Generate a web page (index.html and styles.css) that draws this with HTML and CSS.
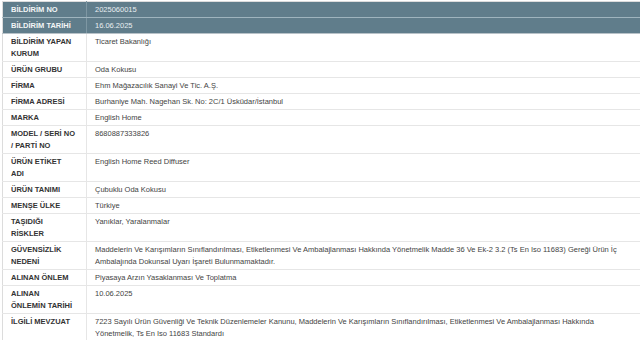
FILE: index.html
```html
<!DOCTYPE html>
<html lang="tr">
<head>
<meta charset="utf-8">
<link rel="stylesheet" href="styles.css">
</head>
<body>
<div class="wrap">
<table class="info">
<colgroup><col class="c-label"><col class="c-value"></colgroup>
<tbody>
<tr class="head"><th>BİLDİRİM NO</th><td>2025060015</td></tr>
<tr class="head"><th>BİLDİRİM TARİHİ</th><td>16.06.2025</td></tr>
<tr><th>BİLDİRİM YAPAN KURUM</th><td>Ticaret Bakanlığı</td></tr>
<tr><th>ÜRÜN GRUBU</th><td>Oda Kokusu</td></tr>
<tr><th>FİRMA</th><td>Ehm Mağazacılık Sanayi Ve Tic. A.Ş.</td></tr>
<tr><th>FİRMA ADRESİ</th><td>Burhaniye Mah. Nagehan Sk. No: 2C/1 Üsküdar/İstanbul</td></tr>
<tr><th>MARKA</th><td>English Home</td></tr>
<tr><th>MODEL / SERİ NO / PARTİ NO</th><td>8680887333826</td></tr>
<tr><th>ÜRÜN ETİKET ADI</th><td>English Home Reed Diffuser</td></tr>
<tr><th>ÜRÜN TANIMI</th><td>Çubuklu Oda Kokusu</td></tr>
<tr><th>MENŞE ÜLKE</th><td>Türkiye</td></tr>
<tr><th>TAŞIDIĞI RİSKLER</th><td>Yanıklar, Yaralanmalar</td></tr>
<tr><th>GÜVENSİZLİK NEDENİ</th><td>Maddelerin Ve Karışımların Sınıflandırılması, Etiketlenmesi Ve Ambalajlanması Hakkında Yönetmelik Madde 36 Ve Ek-2 3.2 (Ts En Iso 11683) Gereği Ürün İç Ambalajında Dokunsal Uyarı İşareti Bulunmamaktadır.</td></tr>
<tr><th>ALINAN ÖNLEM</th><td>Piyasaya Arzın Yasaklanması Ve Toplatma</td></tr>
<tr><th>ALINAN ÖNLEMİN TARİHİ</th><td>10.06.2025</td></tr>
<tr><th>İLGİLİ MEVZUAT</th><td>7223 Sayılı Ürün Güvenliği Ve Teknik Düzenlemeler Kanunu, Maddelerin Ve Karışımların Sınıflandırılması, Etiketlenmesi Ve Ambalajlanması Hakkında Yönetmelik, Ts En Iso 11683 Standardı</td></tr>
</tbody>
</table>
</div>
</body>
</html>
```
FILE: styles.css
```css
html, body {
  margin: 0;
  padding: 0;
  background: #fff;
  overflow: hidden;
}
.wrap {
  padding: 1px 0 0 2px;
}
.info {
  width: 640px;
  table-layout: fixed;
  border-collapse: collapse;
  font-family: "Liberation Sans", Arial, sans-serif;
  font-size: 7.5px;
  line-height: 12px;
  color: #444;
  border-left: 1px solid #dcdcdc;
  border-top: 1px solid #dcdcdc;
}
.c-label {
  width: 84px;
}
.info th, .info td {
  text-align: left;
  vertical-align: top;
  padding: 2px 14px 1px 8px;
  border-bottom: 1px solid #e6e6e6;
}
.info th {
  padding-right: 10.6px;
  font-weight: bold;
  color: #333;
  border-right: 1px solid #e6e6e6;
}
.info tr.head th, .info tr.head td {
  background: #607d8b;
  color: #f2f5f6;
  border-bottom: 1px solid #9fb4be;
  border-right-color: #7e97a3;
}
.info tr.head + tr.head th, .info tr.head + tr.head td {
  border-bottom: 1px solid #b8c2c8;
}
.info tr.head td {
  color: #e8eef1;
}
```
